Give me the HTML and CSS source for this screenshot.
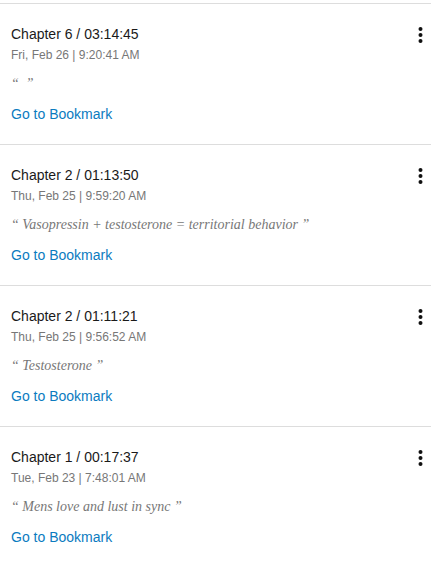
FILE: index.html
```html
<!DOCTYPE html>
<html>
<head>
<meta charset="utf-8">
<link rel="stylesheet" href="styles.css">
</head>
<body>
<div class="list">
  <div class="item">
    <div class="head">
      <div class="title">Chapter 6 / 03:14:45</div>
      <svg class="kebab" width="9" height="18" viewBox="0 0 9 18"><circle cx="4.5" cy="3" r="2"/><circle cx="4.5" cy="9" r="2"/><circle cx="4.5" cy="15" r="2"/></svg>
    </div>
    <div class="date">Fri, Feb 26 | 9:20:41 AM</div>
    <div class="quote">“  ”</div>
    <a class="link" href="#">Go to Bookmark</a>
  </div>
  <div class="item">
    <div class="head">
      <div class="title">Chapter 2 / 01:13:50</div>
      <svg class="kebab" width="9" height="18" viewBox="0 0 9 18"><circle cx="4.5" cy="3" r="2"/><circle cx="4.5" cy="9" r="2"/><circle cx="4.5" cy="15" r="2"/></svg>
    </div>
    <div class="date">Thu, Feb 25 | 9:59:20 AM</div>
    <div class="quote">“ Vasopressin + testosterone = territorial behavior ”</div>
    <a class="link" href="#">Go to Bookmark</a>
  </div>
  <div class="item">
    <div class="head">
      <div class="title">Chapter 2 / 01:11:21</div>
      <svg class="kebab" width="9" height="18" viewBox="0 0 9 18"><circle cx="4.5" cy="3" r="2"/><circle cx="4.5" cy="9" r="2"/><circle cx="4.5" cy="15" r="2"/></svg>
    </div>
    <div class="date">Thu, Feb 25 | 9:56:52 AM</div>
    <div class="quote">“ Testosterone ”</div>
    <a class="link" href="#">Go to Bookmark</a>
  </div>
  <div class="item">
    <div class="head">
      <div class="title">Chapter 1 / 00:17:37</div>
      <svg class="kebab" width="9" height="18" viewBox="0 0 9 18"><circle cx="4.5" cy="3" r="2"/><circle cx="4.5" cy="9" r="2"/><circle cx="4.5" cy="15" r="2"/></svg>
    </div>
    <div class="date">Tue, Feb 23 | 7:48:01 AM</div>
    <div class="quote">“ Mens love and lust in sync ”</div>
    <a class="link" href="#">Go to Bookmark</a>
  </div>
</div>
</body>
</html>
```
FILE: styles.css
```css
html, body {
  margin: 0;
  padding: 0;
  background: #fff;
}
body {
  font-family: "Liberation Sans", Arial, sans-serif;
  overflow: hidden;
}
.list {
  padding-top: 3px;
}
.item {
  border-top: 1px solid #dddddd;
  padding: 21px 6px 21px 11px;
  display: flex;
  flex-direction: column;
  align-items: flex-start;
}
.head {
  display: flex;
  justify-content: space-between;
  align-items: flex-start;
  align-self: stretch;
}
.title {
  font-size: 14px;
  line-height: 18px;
  color: #1a1a1a;
}
.kebab {
  margin-top: 1px;
  fill: #111;
}
.date {
  margin-top: 4px;
  font-size: 12px;
  line-height: 14px;
  color: #777;
}
.quote {
  margin-top: 13px;
  font-family: "Liberation Serif", "Times New Roman", serif;
  font-style: italic;
  font-size: 14px;
  line-height: 18px;
  color: #777;
  white-space: pre;
}
.link {
  margin-top: 12px;
  font-size: 14px;
  line-height: 18px;
  color: #0b7bbf;
  text-decoration: none;
}
```
